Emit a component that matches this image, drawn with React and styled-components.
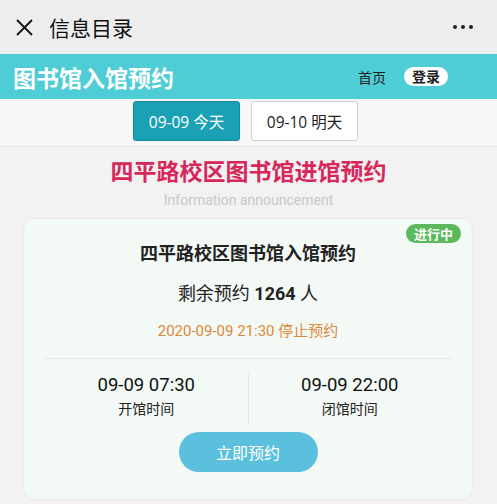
import styled, { createGlobalStyle } from "styled-components";

const Global = createGlobalStyle`
  html, body { margin: 0; padding: 0; }
  body {
    background: #f2f2f2;
    font-family: "Roboto", "Noto Sans CJK SC", sans-serif;
    width: 497px;
    height: 504px;
    overflow: hidden;
  }
`;

const Page = styled.div`
  display: flex;
  flex-direction: column;
  width: 497px;
`;

const TopBar = styled.div`
  height: 54px;
  background: #ededed;
  display: flex;
  align-items: center;
  padding: 0 24px 0 16px;
  box-sizing: border-box;
`;

const TopTitle = styled.div`
  font-family: "Noto Sans CJK SC", sans-serif;
  font-size: 21px;
  color: #111;
  margin-left: 16px;
  flex: 1;
`;

const Dots = styled.div`
  display: flex;
  gap: 4px;
  span {
    width: 4px;
    height: 4px;
    border-radius: 50%;
    background: #222;
  }
`;

const Header = styled.div`
  height: 45px;
  background: #4ecdd6;
  display: flex;
  align-items: center;
  padding: 0 49px 0 13px;
  box-sizing: border-box;
`;

const Brand = styled.div`
  font-family: "Noto Sans CJK SC", sans-serif;
  font-size: 23px;
  font-weight: 700;
  color: #fff;
  flex: 1;
`;

const NavLink = styled.div`
  font-family: "Noto Sans CJK SC", sans-serif;
  font-size: 14px;
  color: #222;
  margin-right: 18px;
`;

const LoginPill = styled.div`
  font-family: "Noto Sans CJK SC", sans-serif;
  font-size: 14px;
  font-weight: 700;
  color: #222;
  background: #fff;
  border-radius: 10px;
  height: 19px;
  line-height: 19px;
  padding: 0 8px;
`;

const DateBar = styled.div`
  height: 48px;
  background: #f7f7f7;
  border-bottom: 1px solid #e6e6e6;
  display: flex;
  justify-content: center;
  align-items: flex-start;
  gap: 11px;
  padding-top: 2px;
  padding-right: 6px;
  box-sizing: border-box;
`;

const DateBtn = styled.div`
  width: 107px;
  height: 40px;
  box-sizing: border-box;
  border-radius: 3px;
  display: flex;
  align-items: center;
  justify-content: center;
  font-size: 15.5px;
  font-family: "Open Sans", "Noto Sans CJK SC", sans-serif;
  background: ${(p) => (p.active ? "#1ba1b6" : "#fff")};
  color: ${(p) => (p.active ? "#fff" : "#222")};
  border: 1px solid ${(p) => (p.active ? "#17899b" : "#d0d0d0")};
`;

const Heading = styled.div`
  text-align: center;
  font-family: "Noto Sans CJK SC", sans-serif;
  font-size: 23px;
  font-weight: 700;
  color: #d8275a;
  margin-top: 6px;
  line-height: 34px;
`;

const SubHeading = styled.div`
  text-align: center;
  font-size: 14px;
  color: #c8c8c8;
  line-height: 18px;
  margin-top: 4px;
`;

const Card = styled.div`
  margin: 10px 25px 0 24px;
  height: 280px;
  background: #f3f9f5;
  border-radius: 10px;
  box-shadow: 0 0 3px rgba(0, 0, 0, 0.08);
  position: relative;
  display: flex;
  flex-direction: column;
  align-items: center;
  padding-top: 20px;
  box-sizing: border-box;
`;

const Badge = styled.div`
  position: absolute;
  top: 5px;
  right: 11px;
  background: #5cb85c;
  color: #fff;
  font-family: "Noto Sans CJK SC", sans-serif;
  font-size: 13px;
  font-weight: 700;
  height: 19px;
  line-height: 19px;
  padding: 0 8px;
  border-radius: 10px;
`;

const CardTitle = styled.div`
  font-family: "Noto Sans CJK SC", sans-serif;
  font-size: 18px;
  font-weight: 700;
  color: #222;
  line-height: 26px;
`;

const Remain = styled.div`
  font-family: "Roboto", "Noto Sans CJK SC", sans-serif;
  font-size: 18px;
  color: #222;
  margin-top: 16px;
  line-height: 26px;
  b { font-weight: 700; }
`;

const Deadline = styled.div`
  font-family: "Roboto", "Noto Sans CJK SC", sans-serif;
  font-size: 15px;
  color: #e0883a;
  margin-top: 14px;
  line-height: 20px;
`;

const Times = styled.div`
  margin-top: 17px;
  width: 406px;
  border-top: 1px solid #e4e9e6;
  display: flex;
  padding-top: 15px;
`;

const TimeCol = styled.div`
  flex: 1;
  display: flex;
  flex-direction: column;
  align-items: center;
  border-left: ${(p) => (p.divider ? "1px solid #e2e6e3" : "none")};
`;

const TimeValue = styled.div`
  font-size: 18.5px;
  color: #111;
  line-height: 22px;
  font-family: "Roboto", sans-serif;
`;

const TimeLabel = styled.div`
  font-family: "Noto Sans CJK SC", sans-serif;
  font-size: 14px;
  color: #222;
  line-height: 20px;
  margin-top: 2px;
  padding-bottom: 6px;
`;

const ReserveBtn = styled.div`
  margin-top: 8px;
  width: 139px;
  height: 40px;
  border-radius: 20px;
  background: #5bc0de;
  color: #fff;
  font-family: "Noto Sans CJK SC", sans-serif;
  font-size: 16px;
  display: flex;
  align-items: center;
  justify-content: center;
`;

export default function App() {
  return (
    <Page>
      <Global />
      <TopBar>
        <svg width="17" height="17" viewBox="0 0 17 17">
          <path d="M1 1 L16 16 M16 1 L1 16" stroke="#111" strokeWidth="1.8" />
        </svg>
        <TopTitle>信息目录</TopTitle>
        <Dots>
          <span />
          <span />
          <span />
        </Dots>
      </TopBar>
      <Header>
        <Brand>图书馆入馆预约</Brand>
        <NavLink>首页</NavLink>
        <LoginPill>登录</LoginPill>
      </Header>
      <DateBar>
        <DateBtn active>09-09 今天</DateBtn>
        <DateBtn>09-10 明天</DateBtn>
      </DateBar>
      <Heading>四平路校区图书馆进馆预约</Heading>
      <SubHeading>Information announcement</SubHeading>
      <Card>
        <Badge>进行中</Badge>
        <CardTitle>四平路校区图书馆入馆预约</CardTitle>
        <Remain>
          剩余预约 <b>1264</b> 人
        </Remain>
        <Deadline>2020-09-09 21:30 停止预约</Deadline>
        <Times>
          <TimeCol>
            <TimeValue>09-09 07:30</TimeValue>
            <TimeLabel>开馆时间</TimeLabel>
          </TimeCol>
          <TimeCol divider>
            <TimeValue>09-09 22:00</TimeValue>
            <TimeLabel>闭馆时间</TimeLabel>
          </TimeCol>
        </Times>
        <ReserveBtn>立即预约</ReserveBtn>
      </Card>
    </Page>
  );
}
